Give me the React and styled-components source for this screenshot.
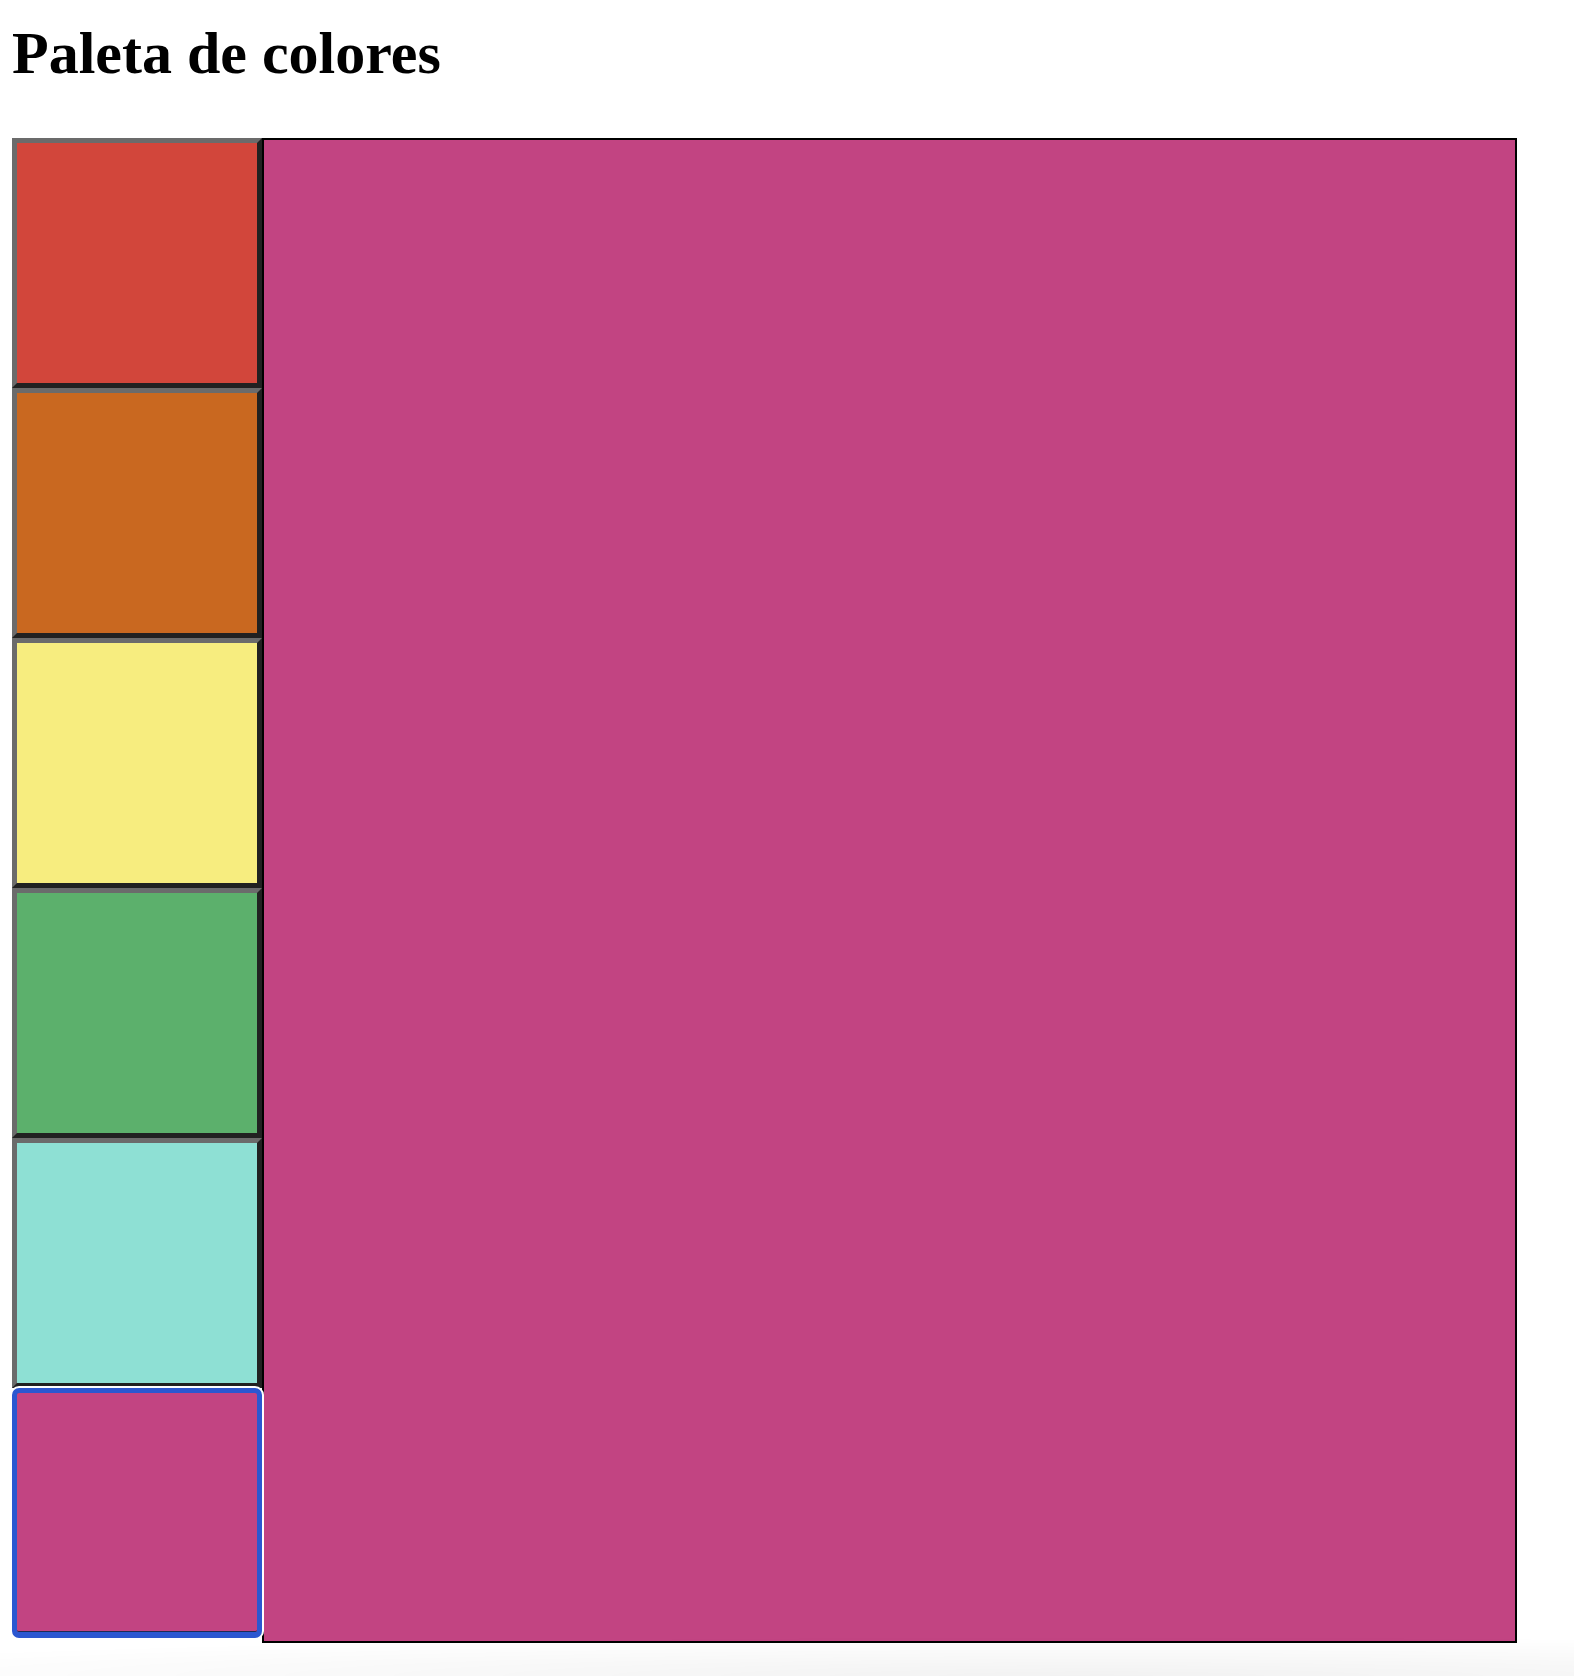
import React, { useState } from 'react'
import styled, { createGlobalStyle } from 'styled-components'

const colors = ['#d2463b', '#c96820', '#f7ed7f', '#5cb06c', '#8ee0d4', '#c24482']

function App() {
	const [selected, setSelected] = useState(5)

	return (
		<Page>
			<GlobalStyle />
			<Title>Paleta de colores</Title>
			<Row>
				<Swatches>
					{colors.map((color, index) => (
						<Swatch
							key={color}
							color={color}
							isSelected={index === selected}
							onClick={() => setSelected(index)}
						/>
					))}
				</Swatches>
				<Display color={colors[selected]} />
			</Row>
			<BottomShade />
		</Page>
	)
}

const GlobalStyle = createGlobalStyle`
	body {
		margin: 0;
		background: #ffffff;
		font-family: "Liberation Serif", "Times New Roman", serif;
	}
`
const Page = styled.div`
	padding: 19px 12px 0;
	min-height: 1676px;
	box-sizing: border-box;
	overflow: hidden;
`
const Title = styled.h1`
	margin: 0 0 50px;
	font-size: 60px;
	font-weight: bold;
	color: #000;
`
const Row = styled.div`
	display: flex;
	align-items: flex-start;
`
const Swatches = styled.div`
	display: flex;
	flex-direction: column;
	width: 250px;
`
const Swatch = styled.button`
	width: 250px;
	height: 250px;
	box-sizing: border-box;
	padding: 0;
	background: ${props => props.color};
	cursor: pointer;
	border: 5px solid;
	border-color: #6b6b6b #212121 #212121 #6b6b6b;
	${props =>
		props.isSelected &&
		`
		position: relative;
		border-color: #2b57d0;
		border-width: 5px 5px 6px;
		border-radius: 7px;
		box-shadow: 0 0 0 2px #ffffff, inset 0 -1px 0 #1f2a55;
	`}
`
const Display = styled.div`
	width: 1255px;
	height: 1505px;
	box-sizing: border-box;
	border: 2px solid #000;
	background: ${props => props.color};
`
const BottomShade = styled.div`
	position: fixed;
	left: 0;
	right: 0;
	bottom: 0;
	height: 40px;
	pointer-events: none;
	background: radial-gradient(ellipse 90% 100% at 70% 100%, rgba(0, 0, 0, 0.05), rgba(0, 0, 0, 0) 100%);
`

export default App
